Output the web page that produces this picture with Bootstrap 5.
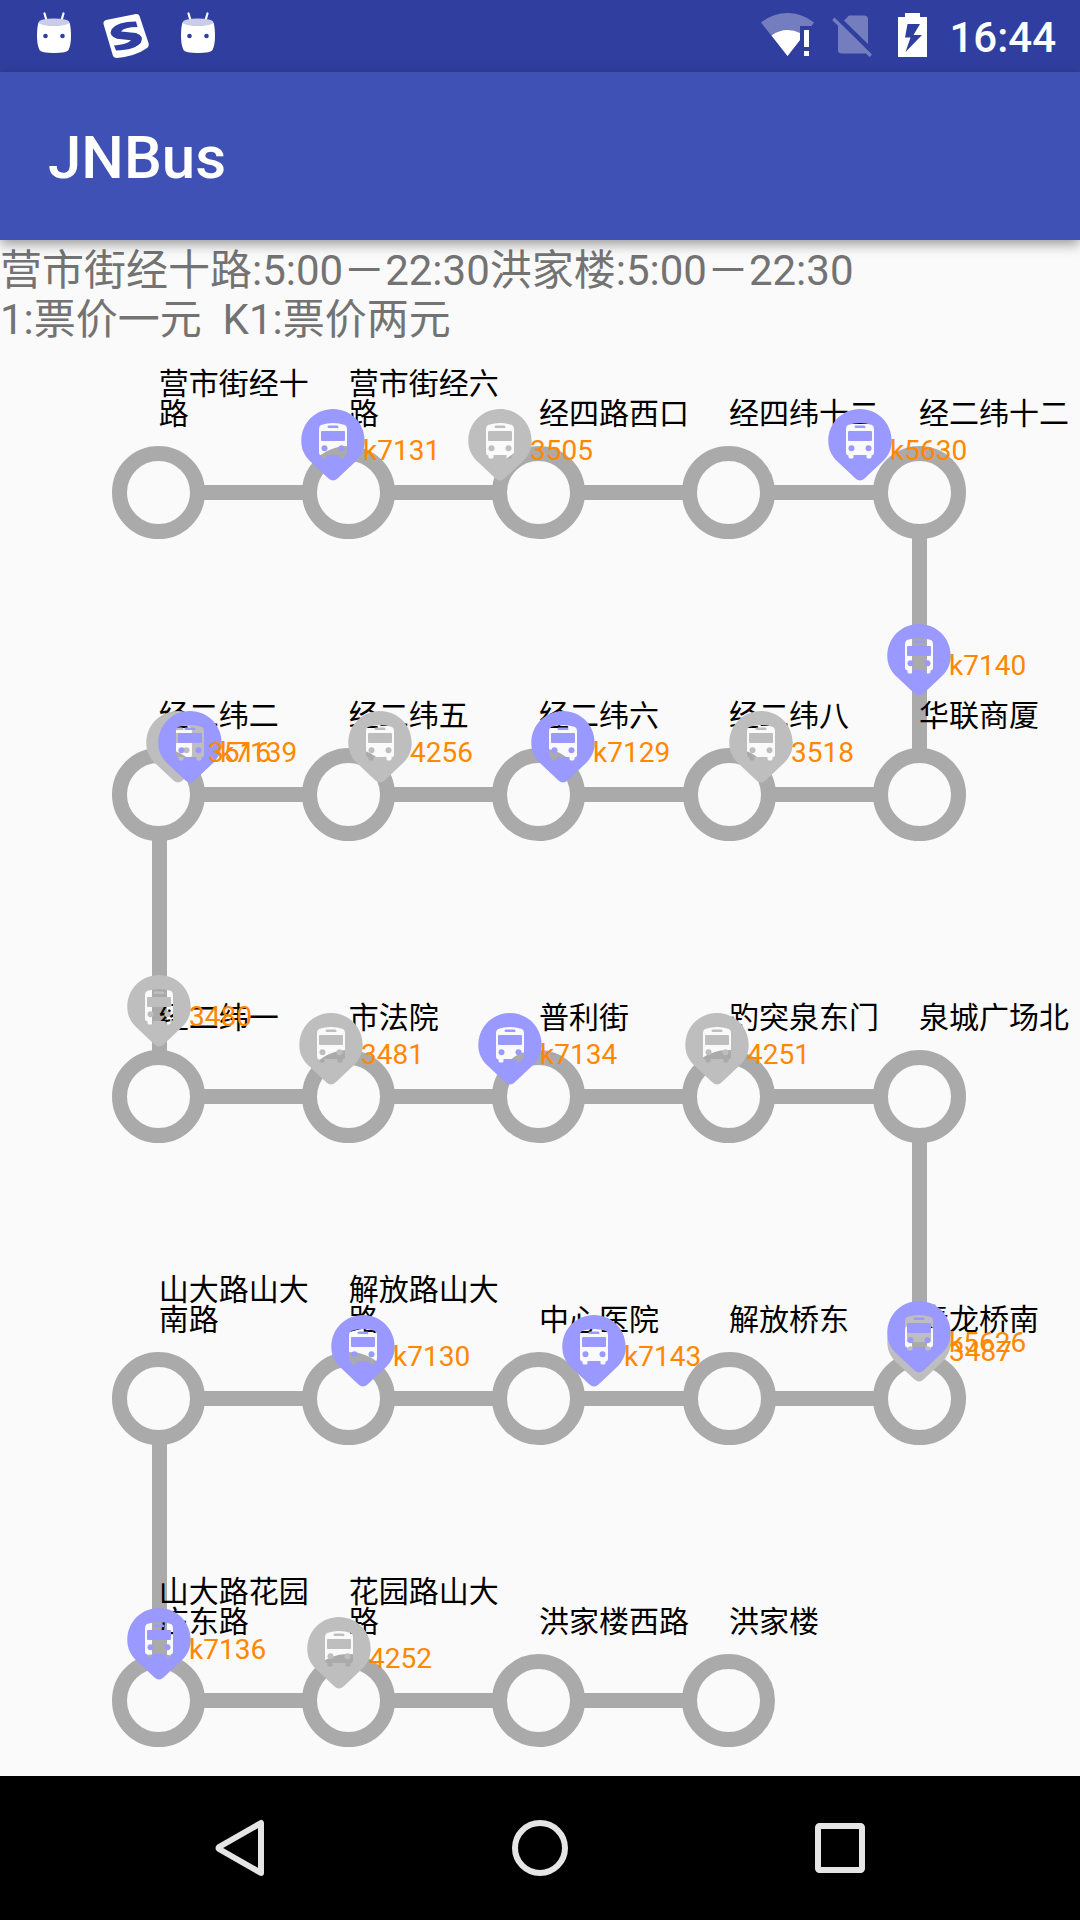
<!DOCTYPE html>
<html lang="zh-CN">
<head>
<meta charset="utf-8">
<meta name="viewport" content="width=device-width, initial-scale=1">
<title>JNBus</title>
<link href="https://cdn.jsdelivr.net/npm/bootstrap@5.3.0/dist/css/bootstrap.min.css" rel="stylesheet">
<style>
  :root { --track: #aaaaaa; --page: #fafafa; }
  body { background: var(--page); font-family: Roboto, "Noto Sans CJK SC", sans-serif; }
  .status-bar { height: 72px; padding: 0 24px 0 18px; background: #303f9f; }
  .status-icons { gap: 18px; }
  .clock { font-size: 42px; line-height: 72px; font-weight: 500; margin-left: 4px; padding-top: 3px; }
  .app-bar { height: 168px; padding: 4px 48px 0; background: #3f51b5; box-shadow: 0 4px 12px rgba(0, 0, 0, .4); z-index: 5; }
  .app-title { font-size: 60px; line-height: 72px; font-weight: 500; }
  .route-info { padding-top: 6px; margin-bottom: 24px; font-size: 42px; line-height: 49px; color: #737373; white-space: pre-wrap; }

  .route-line { padding: 0 6.1% 0 5.9%; margin-bottom: 131px; }
  .route-line:last-of-type { margin-bottom: 29px; }
  .station { position: relative; }
  .station-name { height: 61px; width: 150px; margin: 0 0 17px 50%; font-size: 30px; line-height: 30px; color: #000; position: relative; z-index: 2; }
  .stop-ring { position: relative; z-index: 1; width: 93px; height: 93px; border: 15px solid var(--track); border-radius: 50%; background: var(--page); }
  /* track to the next stop of the same row */
  .station:not(:last-child)::before { content: ""; position: absolute; bottom: 39px; left: 50%; width: 100%; height: 15px; background: var(--track); }
  .flex-row-reverse > .station:not(:last-child)::before { left: auto; right: 50%; }
  /* track down to the next row */
  .turn::after { content: ""; position: absolute; top: 125px; left: calc(50% - 7px); width: 15px; height: 302px; background: var(--track); }

  .bus-pin { position: absolute; left: calc(var(--x) / 1080 * 100%); top: calc(var(--y) * 1px); margin-left: -32px; color: #9999ff; }
  .bus-pin.plain { color: #bebebe; }
  .bus-pin svg { position: relative; z-index: 3; width: 64px; height: 72px; }
  .bus-no { position: relative; z-index: 4; margin: 28px 0 0 -2px; font-size: 28px; line-height: 28px; color: #ff8800; }

  .nav-keys { height: 144px; background: #000; }
  .nav-key { width: 300px; height: 144px; padding: 0; border: 0; background: none; }
</style>
<script src="https://cdn.jsdelivr.net/npm/bootstrap@5.3.0/dist/js/bootstrap.bundle.min.js"></script>
</head>
<body>
<svg class="d-none" aria-hidden="true">
  <symbol id="pin" viewBox="0 0 64 72">
    <path fill="currentColor" fill-rule="evenodd" d="M32 0C49.700 0 63.700 14 63.700 32C63.700 41 60 47.500 54 53L36.500 69.500Q32 73.500 27.500 69.500L10 53C4 47.500 .3 41 .3 32C.3 14 14.300 0 32 0Z
      M20 16Q32 12 44 16Q46 17 46 20V44Q46 46 43.500 46.500V48Q43.500 49.500 41.500 49.500H40Q38.500 49.500 38.500 48V46H25.500V48Q25.500 49.500 24 49.500H22.500Q20.500 49.500 20.500 48V46.500Q18 46 18 44V20Q18 17 20 16Z"/>
    <path fill="currentColor" d="M28 16.500H36Q37.500 16.500 37.500 18T36 19H28Q26.500 19 26.500 17.750T28 16.500ZM21 22H43Q44 22 44 23V31Q44 32 43 32H21Q20 32 20 31V23Q20 22 21 22Z"/>
    <circle cx="23.500" cy="39.300" r="3" fill="currentColor"/><circle cx="40.500" cy="39.300" r="3" fill="currentColor"/>
  </symbol>
  <symbol id="droid" viewBox="0 0 72 72">
    <path d="M26.500 13.500L29 22M45.500 13.500L43 22" stroke="#fff" stroke-width="2.200" stroke-linecap="round"/>
    <path d="M20.500 22.500Q36 29 51.500 22.500Q53 27 53 36T50.500 50Q49 53 36 53T21.500 50Q19 45 19 36T20.500 22.500Z" fill="#fff"/>
    <ellipse cx="36" cy="22.300" rx="15.300" ry="3.800" fill="#c9cde8"/>
    <circle cx="27.500" cy="36" r="2.300" fill="#303f9f"/><circle cx="44.500" cy="36" r="2.300" fill="#303f9f"/>
  </symbol>
</svg>

<div class="d-flex flex-column min-vh-100">
  <div class="status-bar d-flex justify-content-between align-items-center text-white">
    <div class="d-flex">
      <svg width="72" height="72"><use href="#droid"/></svg>
      <svg width="72" height="72" viewBox="0 0 72 72">
        <path d="M16 20L46 14Q48.500 13.600 49.500 16L58.500 43Q59.400 46 57 48Q46 56 27 58Q24 58 23 56L13.500 24Q13 21 16 20Z" fill="#fff"/>
        <path d="M47.500 27L46 21.500Q27 21.500 21.500 29.500Q18.500 36 27 38.800L41 40.200Q37 44.500 24 45.500L26 50.500Q45 50 51 42.500Q54.500 36 46 33L31 31.500Q34 27 47.500 27Z" fill="#303f9f"/>
      </svg>
      <svg width="72" height="72"><use href="#droid"/></svg>
    </div>
    <div class="status-icons d-flex align-items-start">
      <svg width="54" height="72" viewBox="0 0 54 72">
        <path d="M27.500 14Q42 14 54 23.500L51.500 27H40V41L27.500 57L1 23.500Q13 14 27.500 14Z" fill="#fff" fill-opacity=".33"/>
        <path d="M11.500 36.500Q19 31 27.500 31Q34 31 40 34V41L27.500 57Z" fill="#fff"/>
        <path d="M44 31H49V48H44ZM44 52H49V57H44Z" fill="#fff"/>
      </svg>
      <svg width="40" height="72" viewBox="0 0 40 72">
        <path d="M12 21.500L17 16.500H32Q36 16.500 36 20V45ZM6 26.500L34 54.500H10Q6 54.500 6 51ZM2.500 18.500L40 55.500L37.500 58L.2 21Z" fill="#fff" fill-opacity=".33"/>
      </svg>
      <svg class="ms-2" width="29" height="72" viewBox="0 0 29 72">
        <path fill="#fff" fill-rule="evenodd" d="M7 14H22V18H29V58H0V18H7ZM9.500 25L7 38.500H12.500L7.500 53L24 36H15.500L22 25Z"/>
      </svg>
      <div class="clock">16:44</div>
    </div>
  </div>

  <header class="app-bar d-flex align-items-center position-relative">
    <h1 class="app-title text-white m-0">JNBus</h1>
  </header>

  <main>
    <p class="route-info">营市街经十路:5:00－22:30洪家楼:5:00－22:30
1:票价一元  K1:票价两元</p>

    <div class="position-relative">
      <section class="route-line row row-cols-5 g-0">
        <div class="station d-flex flex-column align-items-center"><div class="station-name d-flex align-items-end align-self-start">营市街经十路</div><div class="stop-ring"></div></div>
        <div class="station d-flex flex-column align-items-center"><div class="station-name d-flex align-items-end align-self-start">营市街经六路</div><div class="stop-ring"></div></div>
        <div class="station d-flex flex-column align-items-center"><div class="station-name d-flex align-items-end align-self-start">经四路西口</div><div class="stop-ring"></div></div>
        <div class="station d-flex flex-column align-items-center"><div class="station-name d-flex align-items-end align-self-start">经四纬十二</div><div class="stop-ring"></div></div>
        <div class="station turn d-flex flex-column align-items-center"><div class="station-name d-flex align-items-end align-self-start">经二纬十二</div><div class="stop-ring"></div></div>
      </section>
      <section class="route-line row row-cols-5 g-0 flex-row-reverse">
        <div class="station d-flex flex-column align-items-center"><div class="station-name d-flex align-items-end align-self-start">华联商厦</div><div class="stop-ring"></div></div>
        <div class="station d-flex flex-column align-items-center"><div class="station-name d-flex align-items-end align-self-start">经二纬八</div><div class="stop-ring"></div></div>
        <div class="station d-flex flex-column align-items-center"><div class="station-name d-flex align-items-end align-self-start">经二纬六</div><div class="stop-ring"></div></div>
        <div class="station d-flex flex-column align-items-center"><div class="station-name d-flex align-items-end align-self-start">经二纬五</div><div class="stop-ring"></div></div>
        <div class="station turn d-flex flex-column align-items-center"><div class="station-name d-flex align-items-end align-self-start">经二纬二</div><div class="stop-ring"></div></div>
      </section>
      <section class="route-line row row-cols-5 g-0">
        <div class="station d-flex flex-column align-items-center"><div class="station-name d-flex align-items-end align-self-start">经二纬一</div><div class="stop-ring"></div></div>
        <div class="station d-flex flex-column align-items-center"><div class="station-name d-flex align-items-end align-self-start">市法院</div><div class="stop-ring"></div></div>
        <div class="station d-flex flex-column align-items-center"><div class="station-name d-flex align-items-end align-self-start">普利街</div><div class="stop-ring"></div></div>
        <div class="station d-flex flex-column align-items-center"><div class="station-name d-flex align-items-end align-self-start">趵突泉东门</div><div class="stop-ring"></div></div>
        <div class="station turn d-flex flex-column align-items-center"><div class="station-name d-flex align-items-end align-self-start">泉城广场北</div><div class="stop-ring"></div></div>
      </section>
      <section class="route-line row row-cols-5 g-0 flex-row-reverse">
        <div class="station d-flex flex-column align-items-center"><div class="station-name d-flex align-items-end align-self-start">青龙桥南</div><div class="stop-ring"></div></div>
        <div class="station d-flex flex-column align-items-center"><div class="station-name d-flex align-items-end align-self-start">解放桥东</div><div class="stop-ring"></div></div>
        <div class="station d-flex flex-column align-items-center"><div class="station-name d-flex align-items-end align-self-start">中心医院</div><div class="stop-ring"></div></div>
        <div class="station d-flex flex-column align-items-center"><div class="station-name d-flex align-items-end align-self-start">解放路山大路</div><div class="stop-ring"></div></div>
        <div class="station turn d-flex flex-column align-items-center"><div class="station-name d-flex align-items-end align-self-start">山大路山大南路</div><div class="stop-ring"></div></div>
      </section>
      <section class="route-line row row-cols-5 g-0">
        <div class="station d-flex flex-column align-items-center"><div class="station-name d-flex align-items-end align-self-start">山大路花园庄东路</div><div class="stop-ring"></div></div>
        <div class="station d-flex flex-column align-items-center"><div class="station-name d-flex align-items-end align-self-start">花园路山大路</div><div class="stop-ring"></div></div>
        <div class="station d-flex flex-column align-items-center"><div class="station-name d-flex align-items-end align-self-start">洪家楼西路</div><div class="stop-ring"></div></div>
        <div class="station d-flex flex-column align-items-center"><div class="station-name d-flex align-items-end align-self-start">洪家楼</div><div class="stop-ring"></div></div>
      </section>

      <!-- live bus positions -->
      <div class="bus-pin d-flex align-items-start" style="--x:333;--y:41"><svg><use href="#pin"/></svg><span class="bus-no">k7131</span></div>
      <div class="bus-pin plain d-flex align-items-start" style="--x:500;--y:41"><svg><use href="#pin"/></svg><span class="bus-no">3505</span></div>
      <div class="bus-pin d-flex align-items-start" style="--x:860;--y:41"><svg><use href="#pin"/></svg><span class="bus-no">k5630</span></div>
      <div class="bus-pin d-flex align-items-start" style="--x:919;--y:256"><svg><use href="#pin"/></svg><span class="bus-no">k7140</span></div>
      <div class="bus-pin plain d-flex align-items-start" style="--x:761;--y:343"><svg><use href="#pin"/></svg><span class="bus-no">3518</span></div>
      <div class="bus-pin d-flex align-items-start" style="--x:563;--y:343"><svg><use href="#pin"/></svg><span class="bus-no">k7129</span></div>
      <div class="bus-pin plain d-flex align-items-start" style="--x:380;--y:343"><svg><use href="#pin"/></svg><span class="bus-no">4256</span></div>
      <div class="bus-pin plain d-flex align-items-start" style="--x:178;--y:343"><svg><use href="#pin"/></svg><span class="bus-no">3516</span></div>
      <div class="bus-pin d-flex align-items-start" style="--x:190;--y:343"><svg><use href="#pin"/></svg><span class="bus-no">k7139</span></div>
      <div class="bus-pin plain d-flex align-items-start" style="--x:159;--y:607"><svg><use href="#pin"/></svg><span class="bus-no">3480</span></div>
      <div class="bus-pin plain d-flex align-items-start" style="--x:331;--y:645"><svg><use href="#pin"/></svg><span class="bus-no">3481</span></div>
      <div class="bus-pin d-flex align-items-start" style="--x:510;--y:645"><svg><use href="#pin"/></svg><span class="bus-no">k7134</span></div>
      <div class="bus-pin plain d-flex align-items-start" style="--x:717;--y:645"><svg><use href="#pin"/></svg><span class="bus-no">4251</span></div>
      <div class="bus-pin plain d-flex align-items-start" style="--x:919;--y:942"><svg><use href="#pin"/></svg><span class="bus-no">3487</span></div>
      <div class="bus-pin d-flex align-items-start" style="--x:919;--y:933"><svg><use href="#pin"/></svg><span class="bus-no">k5626</span></div>
      <div class="bus-pin d-flex align-items-start" style="--x:594;--y:947"><svg><use href="#pin"/></svg><span class="bus-no">k7143</span></div>
      <div class="bus-pin d-flex align-items-start" style="--x:363;--y:947"><svg><use href="#pin"/></svg><span class="bus-no">k7130</span></div>
      <div class="bus-pin d-flex align-items-start" style="--x:159;--y:1240"><svg><use href="#pin"/></svg><span class="bus-no">k7136</span></div>
      <div class="bus-pin plain d-flex align-items-start" style="--x:339;--y:1249"><svg><use href="#pin"/></svg><span class="bus-no">4252</span></div>
    </div>
  </main>

  <nav class="nav-keys d-flex justify-content-center align-items-center mt-auto">
    <button class="nav-key" type="button" aria-label="返回"><svg width="60" height="60" viewBox="0 0 60 60" fill="none" stroke="#e5e5e5" stroke-width="6" stroke-linejoin="round"><path d="M51 5V55L9 31Q8 30 9 29Z"/></svg></button>
    <button class="nav-key" type="button" aria-label="主页"><svg width="60" height="60" viewBox="0 0 60 60" fill="none" stroke="#e5e5e5" stroke-width="6"><circle cx="30" cy="30" r="25"/></svg></button>
    <button class="nav-key" type="button" aria-label="最近任务"><svg width="60" height="60" viewBox="0 0 60 60" fill="none" stroke="#e5e5e5" stroke-width="6"><rect x="8" y="8" width="44" height="44" rx="1.500"/></svg></button>
  </nav>
</div>
</body>
</html>
